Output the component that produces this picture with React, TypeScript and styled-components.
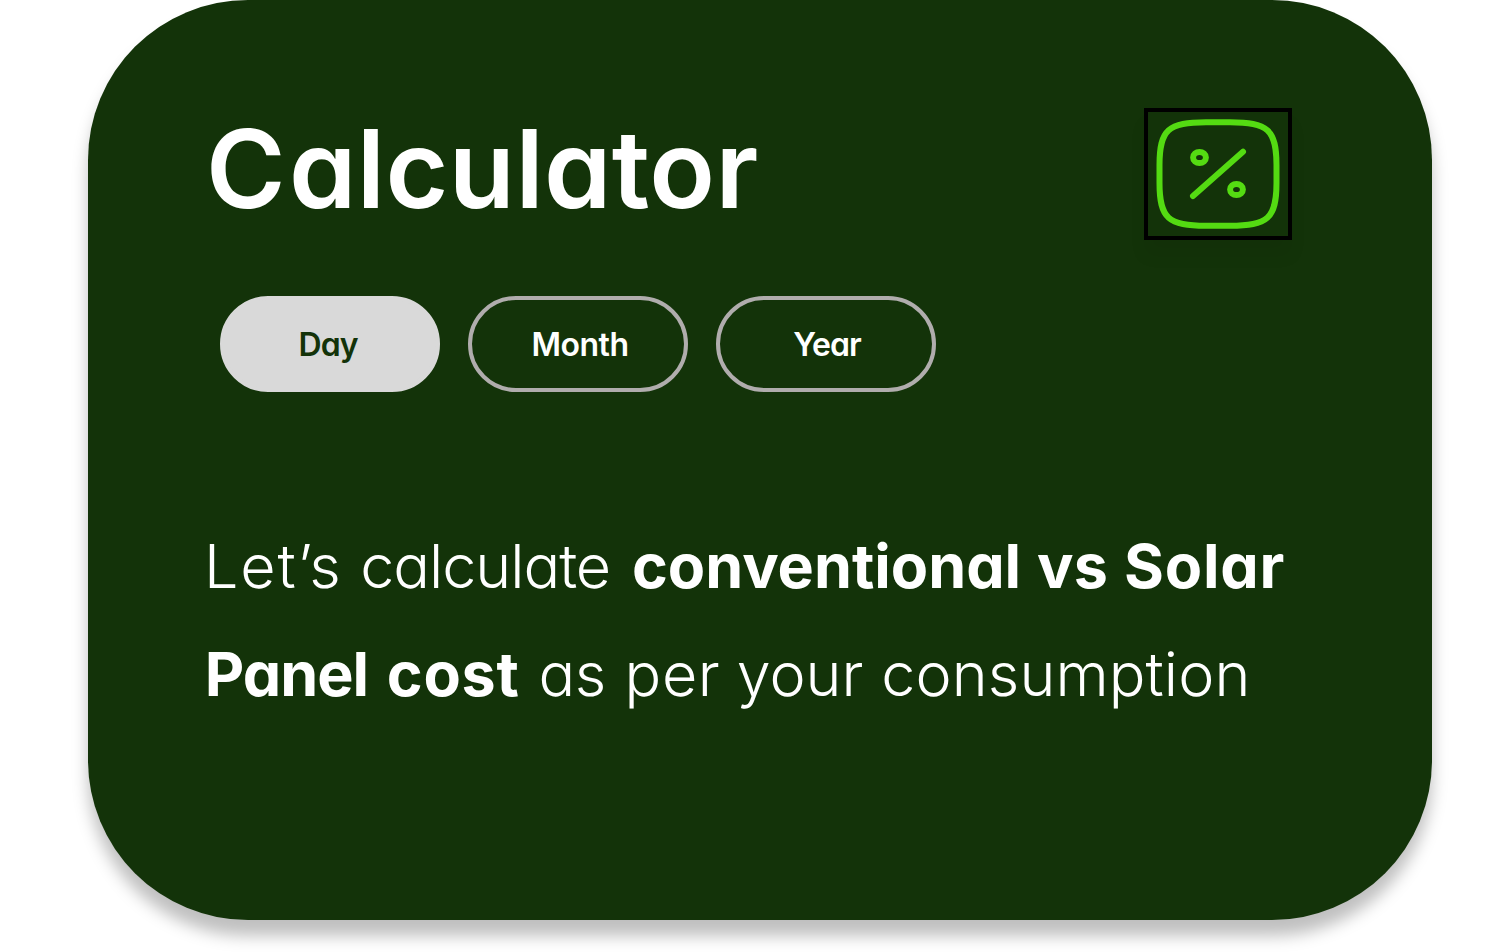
import React from "react";
import styled, { createGlobalStyle } from "styled-components";

const GlobalStyle = createGlobalStyle`
  body {
    margin: 0;
    background: #fff;
    overflow: hidden;
  }
`;

const Page = styled.main`
  box-sizing: border-box;
  height: 952px;
  padding: 0 68px 0 88px;
  font-family: Inter, "Liberation Sans", sans-serif;
  font-feature-settings: "cv11" 1;
`;

const Card = styled.section`
  box-sizing: border-box;
  width: 1344px;
  height: 920px;
  padding: 108px 140px 0 118px;
  border-radius: 160px;
  background: #133309;
  box-shadow: 0 16px 16px rgba(0, 0, 0, 0.25);
  color: #fff;
`;

const Header = styled.header`
  display: flex;
  justify-content: space-between;
  align-items: flex-start;
`;

const Title = styled.h1`
  margin: -4px 0 0;
  font-size: 108px;
  line-height: 130px;
  font-weight: 640;
  letter-spacing: 0.4px;

  &::first-letter {
    letter-spacing: 3.5px;
  }
`;

const IconFrame = styled.div`
  box-sizing: border-box;
  width: 148px;
  height: 132px;
  border: 4px solid #000;
  box-shadow: 0 16px 16px rgba(0, 0, 0, 0.05);

  svg {
    display: block;
  }
`;

const Tabs = styled.nav`
  display: flex;
  gap: 28px;
  margin: 56px 0 0 14px;
`;

const Tab = styled.button<{ $active?: boolean; $nudge: number; $track: number }>`
  box-sizing: border-box;
  width: 220px;
  height: 96px;
  padding: 0;
  border: 4px solid ${(p) => (p.$active ? "#d9d9d9" : "#b0adad")};
  border-radius: 48px;
  background: ${(p) => (p.$active ? "#d9d9d9" : "transparent")};
  color: ${(p) => (p.$active ? "#133309" : "#fff")};
  font: inherit;
  font-feature-settings: inherit;
  font-size: 32px;
  font-weight: 600;
  letter-spacing: ${(p) => p.$track}px;
  text-indent: ${(p) => p.$nudge}px;
`;

const Copy = styled.p`
  margin: 120px 0 0 -2px;
  font-size: 61px;
  line-height: 108px;
  font-weight: 290;
  white-space: nowrap;
`;

const Word = styled.span<{ $track: number; $lead?: number }>`
  margin-left: ${(p) => p.$lead ?? 0}px;
  letter-spacing: ${(p) => p.$track}px;
`;

const Strong = styled.strong`
  font-weight: 700;
`;

const PercentIcon = () => (
  <svg
    width="140"
    height="124"
    viewBox="0 0 140 124"
    fill="none"
    stroke="#54db12"
    strokeWidth="6"
    strokeLinecap="round"
    strokeLinejoin="round"
  >
    <path d="M58 113.67H82C119.5 113.67 128.5 106.5 128.5 71V53C128.5 17.5 119.5 10.33 82 10.33H58C20.5 10.33 11.5 17.5 11.5 53V71C11.5 106.5 20.5 113.67 58 113.67Z" />
    <path d="M45 84L95 39.7" />
    <ellipse cx="51.5" cy="45.5" rx="6.4" ry="5.6" />
    <ellipse cx="88.5" cy="77.5" rx="6.4" ry="5.6" />
  </svg>
);

export default function App() {
  return (
    <Page>
      <GlobalStyle />
      <Card>
        <Header>
          <Title>Calculator</Title>
          <IconFrame>
            <PercentIcon />
          </IconFrame>
        </Header>
        <Tabs>
          <Tab $active $nudge={-4} $track={-1}>Day</Tab>
          <Tab $nudge={4} $track={-0.5}>Month</Tab>
          <Tab $nudge={2} $track={-1}>Year</Tab>
        </Tabs>
        <Copy>
          <Word $track={1.8}>Let’s</Word>{" "}
          <Word $track={-1} $lead={0.4}>calculate</Word>{" "}
          <Strong>
            <Word $track={0} $lead={4.5}>conventional</Word>{" "}
            <Word $track={0} $lead={1.5}>vs</Word>{" "}
            <Word $track={0.8} $lead={1.7}>Solar</Word>
          </Strong>
          <br />
          <Strong>
            <Word $track={-1} $lead={0.7}>Panel</Word>{" "}
            <Word $track={0.7} $lead={4.4}>cost</Word>
          </Strong>{" "}
          <Word $track={-0.6} $lead={1.9}>as</Word>{" "}
          <Word $track={0.6} $lead={1.9}>per</Word>{" "}
          <Word $track={0} $lead={-0.9}>your</Word>{" "}
          <Word $track={0.1} $lead={0.8}>consumption</Word>
        </Copy>
      </Card>
    </Page>
  );
}
